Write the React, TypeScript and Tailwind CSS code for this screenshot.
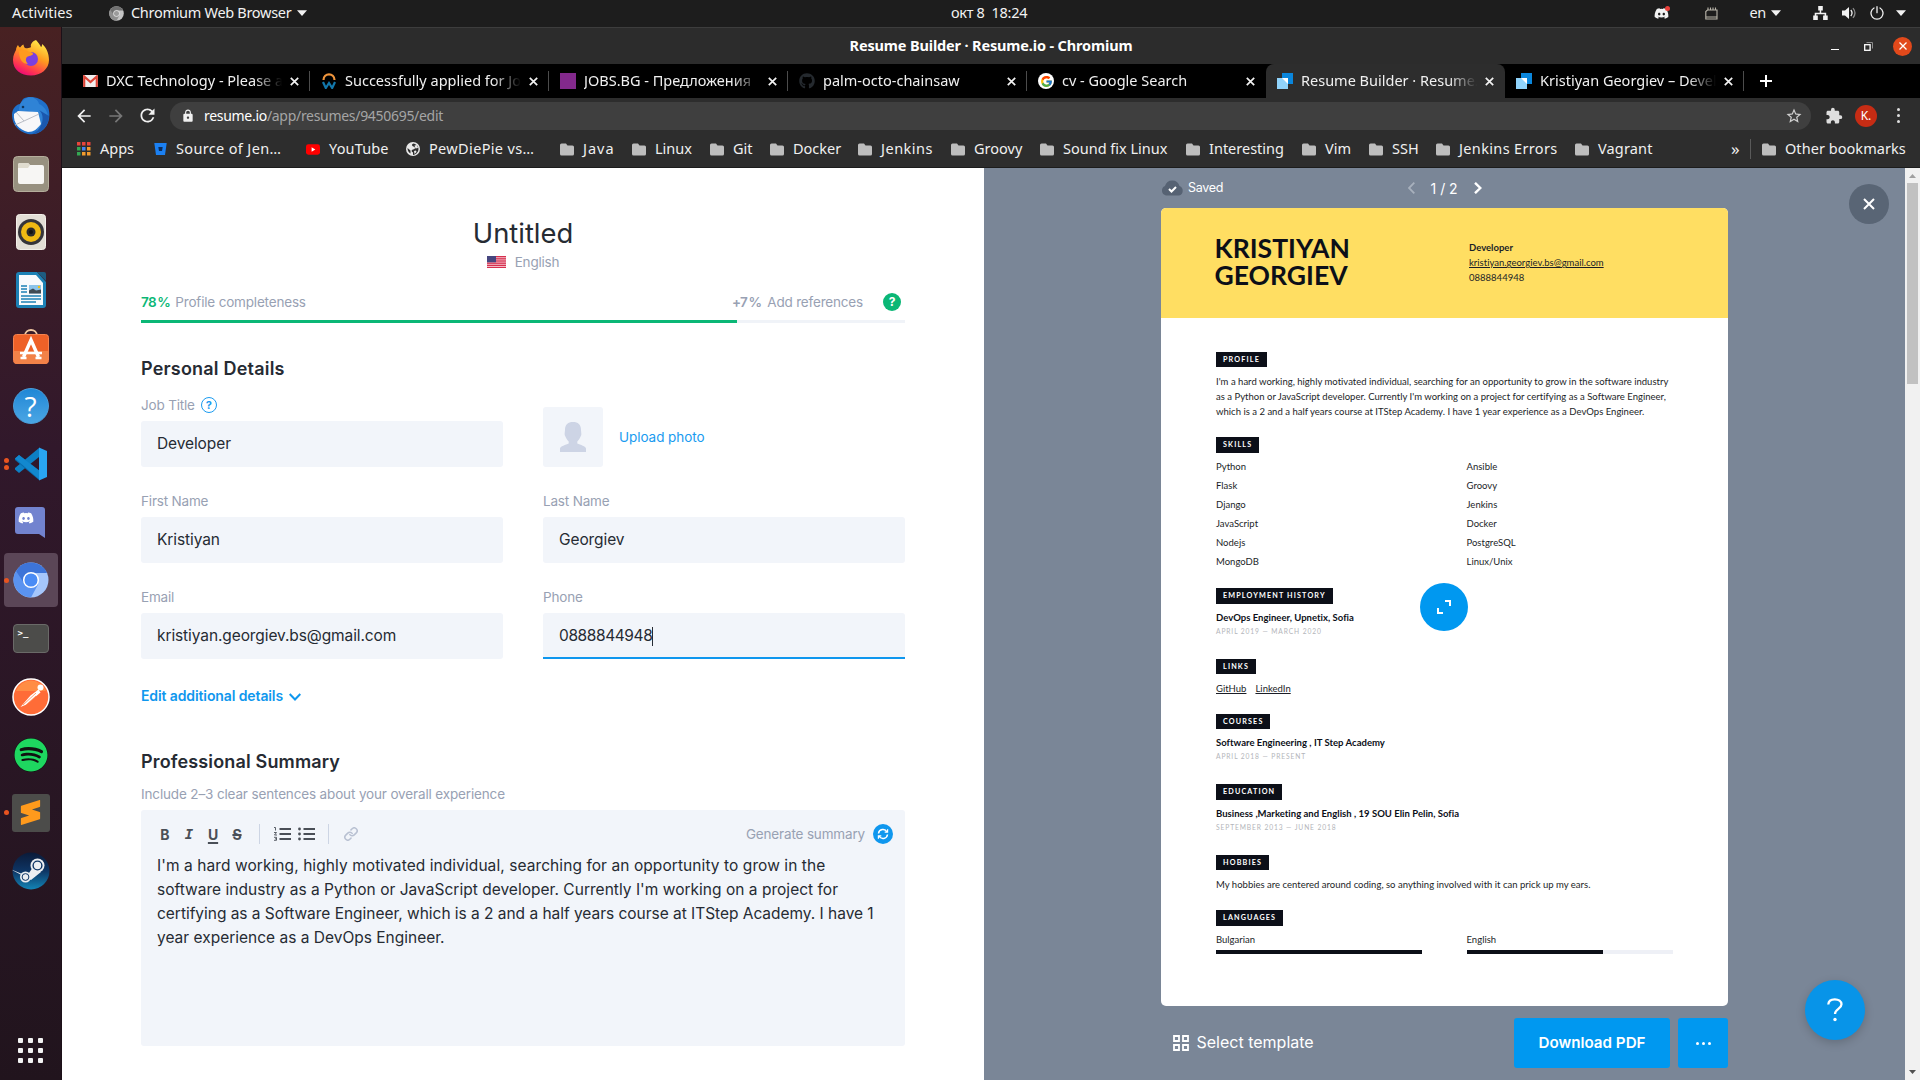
import React from 'react';
import type { ReactNode } from 'react';
import { FaDiscord, FaSpotify, FaGithub } from 'react-icons/fa6';
import { FcGoogle } from 'react-icons/fc';
import { SiSublimetext } from 'react-icons/si';
import { MdExtension, MdStarBorder, MdRefresh, MdArrowBack, MdArrowForward, MdLock } from 'react-icons/md';

/* ---------- Dock ---------- */

const FirefoxIcon = () => (
  <svg width="38" height="38" viewBox="0 0 38 38">
    <defs>
      <linearGradient id="ff" x1="0.8" y1="0" x2="0.3" y2="1">
        <stop offset="0" stopColor="#fff44f" />
        <stop offset="0.45" stopColor="#ff9a1f" />
        <stop offset="0.8" stopColor="#ff3750" />
        <stop offset="1" stopColor="#eb0878" />
      </linearGradient>
    </defs>
    <path d="M24 1c2 2 4 5 5 7 1-.5 1-2 1-3 4 3 7 9 7 16 0 9-8 15.500-18 15.500S1 31 1 21c0-5 2-8 3-10 0-2 1-4 2-5 .5 1 1 2 2 2.500 1-1 2-2.500 3.500-3 0 1 .5 2.500 1.500 3.500 3 .5 5 0 6-1C18 5 21 2 24 1z" fill="url(#ff)" />
    <circle cx="19" cy="20" r="7" fill="#7a3fe0" />
    <path d="M7 12c4-2 8-1 10 1 2 0 4 .5 4 2-1 2-4 1.500-6 3-2 2-1 5 1 7-5 0-9-4-9-13z" fill="#ff9a1f" />
  </svg>
);

const ThunderbirdIcon = () => (
  <svg width="40" height="40" viewBox="0 0 40 40">
    <path d="M12 3C18-1 30 1 36 9c4 7 3 18-3 24-5 5-12 6-16 5C8 36 1 29 1 19 1 12 6 8 9 8z" fill="#1f6fc9" />
    <path d="M14 3c6-4 13 0 14 5 5 2 10 8 9 16-3 8-7 11-13 14 5-8 4-18-3-22-6-3-10 0-13 0 0-6 1-10 6-13z" fill="#2f83d6" />
    <path d="M3 18l4-3 20 1 3 12c-4 5-7 8-13 8C8 34 2 27 3 18z" fill="#f7f7f9" />
    <path d="M5 16l8 9 15-7M13 25l-9 4" fill="none" stroke="#b9bdc6" strokeWidth="1" />
    <path d="M28 14c5 4 5 13-1 20-2 2-4 3-6 4 9 0 17-8 17-18z" fill="#1b58ae" />
    <circle cx="12" cy="11" r="1.300" fill="#10365f" />
  </svg>
);

const FilesIcon = () => (
  <svg width="36" height="36" viewBox="0 0 36 36">
    <rect x="0.500" y="0.500" width="35" height="35" rx="4" fill="#989180" stroke="#b5ae9c" />
    <path d="M5 9a2 2 0 0 1 2-2h8l2 2h12a2 2 0 0 1 2 2v15a2 2 0 0 1-2 2H7a2 2 0 0 1-2-2z" fill="#f7f6f4" />
    <path d="M5 9a2 2 0 0 1 2-2h8l2 2-2 3H5z" fill="#e0dccf" />
  </svg>
);

const RhythmboxIcon = () => (
  <svg width="30" height="36" viewBox="0 0 30 36">
    <rect x="0.500" y="0.500" width="29" height="35" rx="3" fill="#e2ded5" stroke="#f2efe9" />
    <circle cx="15" cy="18" r="13" fill="#35353a" />
    <circle cx="15" cy="18" r="10" fill="#efb913" />
    <circle cx="15" cy="18" r="4.500" fill="#2a2a2c" />
    <circle cx="15" cy="18" r="2" fill="#111" />
  </svg>
);

const WriterIcon = () => (
  <svg width="30" height="36" viewBox="0 0 30 36">
    <path d="M3 0h18l9 10v23a3 3 0 0 1-3 3H3a3 3 0 0 1-3-3V3a3 3 0 0 1 3-3z" fill="#1c81b5" />
    <path d="M3 3h17l7 8v22H3z" fill="#f8fafc" />
    <path d="M21 0h7a2 2 0 0 1 2 2v7z" fill="#1d5c80" />
    <path d="M5 14h6M5 17h6M5 20h6M5 24h20M5 27h20M5 30h15" stroke="#1c81b5" strokeWidth="1.400" />
    <rect x="13" y="13" width="12" height="8.500" fill="#8cc4ea" />
    <path d="M13 21.500v-3l4-2 3 2 5-1v4z" fill="#3f4b54" />
    <circle cx="23" cy="15" r="1.200" fill="#f5c211" />
  </svg>
);

const SoftwareIcon = () => (
  <svg className="-mt-[3px]" width="36" height="36" viewBox="0 0 36 36">
    <path d="M12 7c0-8 12-8 12 0" fill="none" stroke="#f2c9a2" strokeWidth="1.800" />
    <rect x="0.500" y="5.500" width="35" height="29" rx="3" fill="#ee6128" stroke="#f6834f" />
    <path d="M1 22h34v10a3 3 0 0 1-3 3H4a3 3 0 0 1-3-3z" fill="#f28248" />
    <path d="M10.500 28L18 11l7.500 17" fill="none" stroke="#fff" strokeWidth="3.400" />
    <path d="M7 24h22M7.500 29h6M22.500 29h6" fill="none" stroke="#fff" strokeWidth="2.600" />
  </svg>
);

const HelpDockIcon = () => (
  <div className="flex size-9 items-center justify-center rounded-full border border-[#4a9fdc] bg-linear-to-b from-[#1e87d6] to-[#4aa6e4] font-[Open_Sans] text-[28px] leading-none text-white">
    ?
  </div>
);

const VsCodeIcon = () => (
  <svg width="34" height="34" viewBox="0 0 34 34">
    <path d="M25 1v9L5 26 1 22.500v-1.500z" fill="#0d7fc4" />
    <path d="M5 8L1 11.500V13l24 20v-9z" fill="#0a6cae" />
    <path d="M1 11.500L5 8l21 16v9z" fill="#1288cf" />
    <path d="M25 0.500l8 3.500v26l-8 3.500z" fill="#29a5f2" />
  </svg>
);

const DiscordDockIcon = () => (
  <svg width="31" height="33" viewBox="0 0 31 33">
    <path d="M3 1h24a3 3 0 0 1 3 3v28l-6-4H3a3 3 0 0 1-3-3V4a3 3 0 0 1 3-3z" fill="#7283cf" />
    <FaDiscord x="3" y="4" width="24" height="22" color="#fff" />
  </svg>
);

const ChromiumIcon = ({ size, gray }: { size: number; gray?: boolean }) => (
  <svg width={size} height={size} viewBox="0 0 36 36">
    <circle cx="18" cy="18" r="17.500" fill={gray ? '#c4c4c4' : '#a5c6fb'} />
    <path d="M18 18L3 9A17.500 17.500 0 0 0 18 35.500l7-13z" fill={gray ? '#8f8f8f' : '#5a93f0'} />
    <path d="M3 9a17.500 17.500 0 0 1 31 2H18a8 8 0 0 0-7 10z" fill={gray ? '#707070' : '#3d74d8'} />
    <circle cx="18" cy="18" r="7.300" fill={gray ? '#9b9b9b' : '#4a8cf5'} stroke="#fff" strokeWidth="1.500" />
  </svg>
);

const TerminalIcon = () => (
  <div className="h-[29px] w-[36px] rounded-[4px] border border-[#6a6a68] bg-[#4c4c4a] pt-[3px] pl-[4px] font-[DejaVu_Sans_Mono] text-[9px] leading-[10px] font-bold text-white">
    &gt;_
  </div>
);

const PostmanIcon = () => (
  <svg width="38" height="38" viewBox="0 0 38 38">
    <circle cx="19" cy="19" r="18" fill="#ff6c37" stroke="#fff" strokeWidth="1.500" />
    <path d="M4 13a16 16 0 0 1 30 0z" fill="#ff8d45" />
    <circle cx="28.500" cy="9.500" r="3" fill="#fff" />
    <path d="M26.500 11.500l-8 6-10 11.500 6-2.500 8-7 6-5z" fill="#fff" />
    <path d="M11 27l13-12M14 27l10-9" stroke="#ff7a3c" strokeWidth="0.700" />
  </svg>
);

const SpotifyIcon = () => (
  <div className="size-[34px] rounded-full bg-[#111]">
    <FaSpotify className="size-[34px] text-[#1ed760]" />
  </div>
);

const SublimeIcon = () => (
  <div className="flex size-[38px] items-center justify-center rounded-[3px] bg-[#4c4c4a]">
    <SiSublimetext className="size-[25px] text-[#ff9a1c]" />
  </div>
);

const SteamIcon = () => (
  <svg width="38" height="38" viewBox="0 0 38 38">
    <defs>
      <linearGradient id="steam" x1="0" y1="0" x2="0" y2="1">
        <stop offset="0" stopColor="#0b1a38" />
        <stop offset="0.500" stopColor="#0e3564" />
        <stop offset="1" stopColor="#1387b8" />
      </linearGradient>
      <clipPath id="steamClip">
        <circle cx="19" cy="19" r="18.500" />
      </clipPath>
    </defs>
    <g clipPath="url(#steamClip)">
      <rect width="38" height="38" fill="url(#steam)" />
      <path d="M-2 17l17 7 6-9 8 5-10 8z" fill="#eceef1" />
      <circle cx="13.500" cy="25" r="5.500" fill="#eceef1" />
      <circle cx="13.500" cy="25" r="3.400" fill="none" stroke="#0e3564" strokeWidth="1" />
      <circle cx="25.500" cy="13.500" r="7" fill="#eceef1" />
      <circle cx="25.500" cy="13.500" r="4.400" fill="none" stroke="#0e3564" strokeWidth="1.400" />
    </g>
  </svg>
);

type DockItem = { icon: ReactNode; dots?: number; active?: boolean };

const dockItems: DockItem[] = [
  { icon: <FirefoxIcon /> },
  { icon: <ThunderbirdIcon /> },
  { icon: <FilesIcon /> },
  { icon: <RhythmboxIcon /> },
  { icon: <WriterIcon /> },
  { icon: <SoftwareIcon /> },
  { icon: <HelpDockIcon /> },
  { icon: <VsCodeIcon />, dots: 2 },
  { icon: <DiscordDockIcon /> },
  { icon: <ChromiumIcon size={36} />, dots: 1, active: true },
  { icon: <TerminalIcon /> },
  { icon: <PostmanIcon /> },
  { icon: <SpotifyIcon /> },
  { icon: <SublimeIcon />, dots: 1 },
  { icon: <SteamIcon /> },
];

const Dock = () => (
  <nav className="flex w-[62px] shrink-0 flex-col items-center border-r border-[#1c1018] bg-linear-to-b from-[#482122] via-[#31182b] via-40% to-[#21141d] pt-[1.500px]">
    {dockItems.map((item, i) => (
      <div key={i} className="flex h-[58.100px] w-full items-center justify-center">
        <div
          className={
            item.active
              ? 'relative flex h-[54px] w-[54px] items-center justify-center rounded-[4px] bg-[#5b4657]'
              : 'relative flex h-[54px] w-[54px] items-center justify-center'
          }
        >
          {item.icon}
          {item.dots && (
            <div className="absolute top-0 left-0 flex h-full w-[5px] flex-col items-center justify-center gap-[2px]">
              {Array.from({ length: item.dots }, (_, d) => (
                <span key={d} className="size-[5px] rounded-full bg-[#e95420]" />
              ))}
            </div>
          )}
        </div>
      </div>
    ))}
    <div className="mt-auto mb-[17px] grid grid-cols-3 gap-[5px]">
      {Array.from({ length: 9 }, (_, i) => (
        <span key={i} className="size-[5px] rounded-[1px] bg-[#f2f2f2]" />
      ))}
    </div>
  </nav>
);

/* ---------- System bar ---------- */

const Caret = ({ className = '' }: { className?: string }) => (
  <svg className={className} width="10" height="6" viewBox="0 0 10 6" fill="#f2f2f2">
    <path d="M0 0.300h10L5 6z" />
  </svg>
);

const SystemBar = () => (
  <header className="grid h-[27px] shrink-0 grid-cols-[1fr_auto_1fr] items-center bg-[#1d1d1d] pb-px text-[14.500px] tracking-[-0.300px] text-[#f2f2f2]">
    <div className="flex items-center">
      <span className="ml-3 w-[97px] tracking-normal">Activities</span>
      <ChromiumIcon size={15} gray />
      <span className="ml-[7px]">Chromium Web Browser</span>
      <Caret className="ml-[6px]" />
    </div>
    <span className="mr-[-60px] w-[78px] text-[14.500px] whitespace-pre">окт 8  18:24</span>
    <div className="flex items-center justify-end pr-[14px]">
      <div className="relative mr-[36px]">
        <FaDiscord className="size-[15px]" />
        <span className="absolute top-0 right-[-1px] size-[5px] rounded-full bg-[#e8403a]" />
      </div>
      <svg className="mr-[31px]" width="13" height="13" viewBox="0 0 13 13" fill="none" stroke="#b9b5aa" strokeWidth="1.100">
        <path d="M2.500 3h9.500v9H0.800V4.500zM3 0.500v2M5.500 0.500v2M8 0.500v2M10.500 0.500v2M0.800 10h11" />
      </svg>
      <span>en</span>
      <Caret className="ml-[5px]" />
      <svg className="ml-[32px]" width="15" height="14" viewBox="0 0 15 14" fill="#f2f2f2">
        <path d="M5.200 0h4.600v4.500H8.200v2.200h5v2.800h1.500V14h-4.600V9.500h1.500V8.200H3.300v1.300h1.500V14H.2V9.500h1.500V6.700h5V4.500H5.200z" />
      </svg>
      <svg className="ml-[14px]" width="15" height="14" viewBox="0 0 15 14" fill="#f2f2f2">
        <path d="M0 4.500h3L7 1v12L3 9.500H0z" />
        <path d="M8.800 4q2.500 3 0 6" fill="none" stroke="#f2f2f2" strokeWidth="1.300" />
        <path d="M11 2.200q4 4.800 0 9.600" fill="none" stroke="#8a8a8a" strokeWidth="1.300" />
      </svg>
      <svg className="ml-[13px]" width="14" height="14" viewBox="0 0 14 14" fill="none" stroke="#f2f2f2" strokeWidth="1.300" strokeLinecap="round">
        <path d="M7 0.700v6M4 2a6 6 0 1 0 6 0" />
      </svg>
      <Caret className="ml-[12px]" />
    </div>
  </header>
);

/* ---------- Browser chrome ---------- */

const TitleBar = () => (
  <div className="grid h-[37px] shrink-0 grid-cols-[1fr_auto_1fr] items-center border-t border-[#3d3d3d] bg-[#2c2c2c] text-white">
    <span />
    <h1 className="text-[14.500px] font-bold tracking-[-0.150px]">Resume Builder · Resume.io - Chromium</h1>
    <div className="flex items-center justify-end pr-[8px]">
      <span className="mt-[7px] h-[1.500px] w-[8px] bg-white" />
      <svg className="ml-[25px]" width="9" height="9" viewBox="0 0 9 9" fill="none">
        <path d="M2.500 0.500h6v6" stroke="#8b8b8b" />
        <rect x="0.700" y="2.700" width="5.400" height="5.600" stroke="#fff" strokeWidth="1.300" />
      </svg>
      <span className="ml-[20px] flex size-[19px] items-center justify-center rounded-full bg-[#e2491b]">
        <svg width="8" height="8" viewBox="0 0 8 8" stroke="#fff" strokeWidth="1.300">
          <path d="M0.500 0.500l7 7M7.500 0.500l-7 7" />
        </svg>
      </span>
    </div>
  </div>
);

const ResumeIoIcon = () => (
  <svg width="16" height="16" viewBox="0 0 16 16">
    <path d="M5 0h11v11H5z" fill="#0a86dc" />
    <path d="M0 5h11v11H0z" fill="#90d3fb" />
    <path d="M5 5h6v6z" fill="#fff" />
  </svg>
);

const GmailIcon = () => (
  <svg width="15" height="12" viewBox="0 0 15 12">
    <rect width="15" height="12" rx="1" fill="#f0eeee" />
    <path d="M1.200 12V1.500L7.500 7l6.300-5.500V12" fill="none" stroke="#dc4437" strokeWidth="2.200" />
  </svg>
);

const ArcWIcon = () => (
  <svg width="14" height="16" viewBox="0 0 14 16" fill="none">
    <path d="M1.500 7C1.500-.5 12.500-.5 12.500 7" stroke="#f0953c" strokeWidth="2.200" />
    <path d="M1 9l2.800 6L7 10l3.200 5L13 9" stroke="#1277ab" strokeWidth="2.200" />
  </svg>
);

const GoogleTabIcon = () => (
  <span className="flex size-4 items-center justify-center rounded-full bg-white">
    <FcGoogle className="size-[13px]" />
  </span>
);

const tabs: { title: string; icon: ReactNode; active?: boolean; divider?: boolean }[] = [
  { title: 'DXC Technology - Please a', icon: <GmailIcon />, divider: true },
  { title: 'Successfully applied for Jo', icon: <ArcWIcon />, divider: true },
  { title: 'JOBS.BG - Предложения', icon: <span className="size-4 bg-[#83298c]" />, divider: true },
  { title: 'palm-octo-chainsaw', icon: <FaGithub className="size-4 text-[#24292e]" />, divider: true },
  { title: 'cv - Google Search', icon: <GoogleTabIcon /> },
  { title: 'Resume Builder · Resume.', icon: <ResumeIoIcon />, active: true },
  { title: 'Kristiyan Georgiev – Devel', icon: <ResumeIoIcon />, divider: true },
];

const TabStrip = () => (
  <div className="flex h-[34px] shrink-0 bg-black pl-[8.500px] text-[14.500px] text-[#f0f0f0]">
    {tabs.map((tab) => (
      <div
        key={tab.title}
        className={
          tab.active
            ? 'flex w-[239px] shrink-0 items-center rounded-t-[8px] bg-[#2d2d2d] pl-[11.500px]'
            : 'flex w-[239px] shrink-0 items-center pl-[11.500px]'
        }
      >
        <span className="flex w-4 shrink-0 items-center justify-center">{tab.icon}</span>
        <span className="ml-2 w-[176px] shrink-0 overflow-hidden mask-r-from-84% mask-r-to-100% whitespace-nowrap">{tab.title}</span>
        <svg className="ml-[8px] shrink-0" width="9" height="9" viewBox="0 0 9 9" stroke="#f2f2f2" strokeWidth="1.700">
          <path d="M0.800 0.800l7.400 7.400M8.200 0.800l-7.400 7.400" />
        </svg>
        {tab.divider && <span className="ml-[10px] h-5 w-px bg-[#4c4c4c]" />}
      </div>
    ))}
    <svg className="ml-[16px] self-center" width="12" height="12" viewBox="0 0 12 12" stroke="#fff" strokeWidth="2">
      <path d="M6 0v12M0 6h12" />
    </svg>
  </div>
);

const AddressBar = () => (
  <div className="flex h-9 shrink-0 items-center bg-[#2d2d2d] pb-px text-[#f0f0f0]">
    <MdArrowBack className="ml-[12px] size-[20px]" />
    <MdArrowForward className="ml-[12px] size-[20px] text-[#777]" />
    <MdRefresh className="ml-[11px] size-[21px]" />
    <div className="ml-[12px] flex h-7 w-[1641px] items-center rounded-full bg-[#3f3f3f] pr-[8px] pl-[11px]">
      <MdLock className="size-[14px]" />
      <span className="ml-[9px] flex-1 text-[14px] tracking-[-0.300px] text-[#a5a5a5]">
        <span className="text-white">resume.io</span>/app/resumes/9450695/edit
      </span>
      <MdStarBorder className="size-[18px] text-[#d0d0d0]" />
    </div>
    <MdExtension className="ml-[14px] size-[18px] text-[#dedede]" />
    <span className="ml-[12px] flex size-[22px] items-center justify-center rounded-full bg-[#c62c14] text-[12px] text-white">K.</span>
    <span className="ml-[20px] flex flex-col gap-[3px]">
      <span className="size-[3px] rounded-full bg-[#dedede]" />
      <span className="size-[3px] rounded-full bg-[#dedede]" />
      <span className="size-[3px] rounded-full bg-[#dedede]" />
    </span>
  </div>
);

const FolderIcon = () => (
  <svg width="14" height="13" viewBox="0 0 14 13" fill="#bdbdbd">
    <path d="M1.500 0.500h4.500l1.500 2h5a1.500 1.500 0 0 1 1.500 1.500v7a1.500 1.500 0 0 1-1.500 1.500h-11A1.500 1.500 0 0 1 0 11V2A1.500 1.500 0 0 1 1.500 0.500z" />
  </svg>
);

const appDots = ['#e8453c', '#e8453c', '#e8453c', '#34a853', '#4285f4', '#f29b2e', '#34a853', '#f29b2e', '#f29b2e'];

const AppsIcon = () => (
  <svg width="14" height="14" viewBox="0 0 14 14">
    {appDots.map((c, i) => (
      <rect key={i} x={(i % 3) * 5} y={Math.floor(i / 3) * 5} width="3.500" height="3.500" fill={c} />
    ))}
  </svg>
);

const BitbucketIcon = () => (
  <svg width="13" height="12" viewBox="0 0 13 12">
    <path d="M0.300 0h12.400l-1.700 12H2z" fill="#1b80f2" />
    <path d="M4.300 4h4.400L8 8H5z" fill="#0b2c5c" />
  </svg>
);

const YouTubeIcon = () => (
  <svg width="15" height="11" viewBox="0 0 15 11">
    <rect width="15" height="11" rx="2.500" fill="#f00" />
    <path d="M6 3.200v4.600l4-2.300z" fill="#fff" />
  </svg>
);

const GlobeIcon = () => (
  <svg width="14" height="14" viewBox="0 0 14 14">
    <circle cx="7" cy="7" r="7" fill="#e8e8e8" />
    <path d="M7.500 1.500C6 2 5.500 3 6.500 4s2.500.5 2.500 2-2 1-3 2 0 2 1 2.500L7 13c3-.5 5.500-3 5.500-6S10 2 7.500 1.500zM1.500 6l3 2.500v3C2.500 10.500 1.500 8.500 1.500 6z" fill="#2d2d2d" />
    <path d="M8.500 3.500l2.500-.5 1 3-2.500.5zM8 9l2-.5.500 1.500L8.500 12z" fill="#e8e8e8" />
  </svg>
);

const bookmarks: { label: string; width: string; icon?: ReactNode }[] = [
  { label: 'Apps', width: 'w-[76px]', icon: <AppsIcon /> },
  { label: 'Source of Jen…', width: 'w-[153px] tracking-[0.350px]', icon: <BitbucketIcon /> },
  { label: 'YouTube', width: 'w-[100px] tracking-[0.150px]', icon: <YouTubeIcon /> },
  { label: 'PewDiePie vs…', width: 'w-[154px] tracking-[0.350px]', icon: <GlobeIcon /> },
  { label: 'Java', width: 'w-[72px] tracking-[1px]' },
  { label: 'Linux', width: 'w-[78px]' },
  { label: 'Git', width: 'w-[60px]' },
  { label: 'Docker', width: 'w-[88px]' },
  { label: 'Jenkins', width: 'w-[93px] tracking-[0.500px]' },
  { label: 'Groovy', width: 'w-[89px]' },
  { label: 'Sound fix Linux', width: 'w-[146px]' },
  { label: 'Interesting', width: 'w-[116px]' },
  { label: 'Vim', width: 'w-[67px]' },
  { label: 'SSH', width: 'w-[67px]' },
  { label: 'Jenkins Errors', width: 'w-[139px] tracking-[0.350px]' },
  { label: 'Vagrant', width: 'w-[156px] tracking-[0.150px]' },
];

const BookmarksBar = () => (
  <div className="flex h-[34px] shrink-0 items-center border-b border-[#1c1c1c] bg-[#2d2d2d] pb-[3px] pl-[15px] text-[14.500px] text-[#f0f0f0]">
    {bookmarks.map((b) => (
      <div key={b.label} className={`flex shrink-0 items-center gap-[9px] whitespace-nowrap ${b.width}`}>
        <span className="flex w-[14px] shrink-0 justify-center">{b.icon ?? <FolderIcon />}</span>
        {b.label}
      </div>
    ))}
    <span className="mb-[2px] w-[19px] text-[17px] leading-none">»</span>
    <span className="h-5 w-px bg-[#5a5a5a]" />
    <span className="mr-[9px] ml-[11px]">
      <FolderIcon />
    </span>
    <span className="whitespace-nowrap tracking-[0.050px]">Other bookmarks</span>
  </div>
);

/* ---------- Editor form ---------- */

const Label = ({ children }: { children: ReactNode }) => (
  <div className="mb-[6px] flex h-5 items-center gap-[6px] text-[13.500px] tracking-[-0.180px] text-[#98a1b3]">{children}</div>
);

const Field = ({ label, value, hint, focused }: { label: string; value: string; hint?: boolean; focused?: boolean }) => (
  <div>
    <Label>
      {label}
      {hint && (
        <span className="flex size-4 items-center justify-center rounded-full border-[1.500px] border-[#1a9bf0] text-[11px] font-bold text-[#1a9bf0]">
          ?
        </span>
      )}
    </Label>
    <div
      className={
        focused
          ? 'flex h-[46px] items-center rounded-t-[3px] border-b-2 border-[#0f97ee] bg-[#f2f5fa] pt-[2px] pl-4 text-[15.500px] tracking-[-0.400px] text-[#262b33]'
          : 'flex h-[46px] items-center rounded-[3px] bg-[#f2f5fa] pl-4 text-[15.500px] tracking-[-0.100px] text-[#262b33]'
      }
    >
      {value}
      {focused && <span className="h-[19px] w-px bg-[#262b33]" />}
    </div>
  </div>
);

const UsFlag = () => (
  <svg width="19" height="12" viewBox="0 0 19 12">
    <rect width="19" height="12" fill="#f3b9c4" />
    <path d="M0 0.500h19M0 2.300h19M0 4.100h19M0 5.900h19M0 7.700h19M0 9.500h19M0 11.500h19" stroke="#d6304f" strokeWidth="1" />
    <rect width="9" height="6.300" fill="#46467f" />
  </svg>
);

const EditorToolbar = () => (
  <div className="flex h-[30px] items-center font-[Inter] text-[14px] font-bold text-[#4a4f57]">
    <span className="w-6 text-center">B</span>
    <span className="w-6 text-center font-[DejaVu_Sans_Mono] italic">I</span>
    <span className="w-6 text-center underline decoration-[1.500px] underline-offset-2">U</span>
    <span className="w-6 text-center line-through decoration-[1.500px]">S</span>
    <span className="ml-[10px] h-5 w-px bg-[#cdd5e4]" />
    <svg className="ml-[14px]" width="17" height="14" viewBox="0 0 17 14" stroke="#4a4f57" fill="none">
      <path d="M5.500 2H17M5.500 7H17M5.500 12H17" strokeWidth="2" />
      <path d="M0 .5h1.500v3M0 5.500h2.500L.5 8h2.500M0 10.300h2.500v3H0M1 11.800h1.500" strokeWidth="0.900" />
    </svg>
    <svg className="ml-[7px]" width="17" height="14" viewBox="0 0 17 14" stroke="#4a4f57" fill="#4a4f57">
      <path d="M5.500 2H17M5.500 7H17M5.500 12H17" strokeWidth="2" />
      <path d="M1.500 2h.01M1.500 7h.01M1.500 12h.01" strokeWidth="2.800" strokeLinecap="round" />
    </svg>
    <span className="ml-[13px] h-5 w-px bg-[#cdd5e4]" />
    <svg className="ml-[15px]" width="14" height="14" viewBox="0 0 24 24" fill="none" stroke="#b9c1d2" strokeWidth="2.600" strokeLinecap="round">
      <path d="M10 13a5 5 0 0 0 7.540.54l3.500-3.500a5 5 0 0 0-7.070-7.070l-2 2" />
      <path d="M14 11a5 5 0 0 0-7.540-.54l-3.500 3.500a5 5 0 0 0 7.070 7.070l2-2" />
    </svg>
    <span className="ml-auto text-[13.500px] font-normal tracking-[-0.160px] text-[#98a1b3]">Generate summary</span>
    <span className="mr-[12px] ml-[8px] flex size-5 items-center justify-center rounded-full bg-[#0f97ee]">
      <svg width="12" height="12" viewBox="0 0 12 12" fill="none" stroke="#fff" strokeWidth="1.500">
        <path d="M1.500 5.500a4.500 4.500 0 0 1 8.500-1.500M10.500 6.500A4.500 4.500 0 0 1 2 8" />
        <path d="M10.600 1.300V4.200H7.700M1.400 10.700V7.800H4.300" strokeWidth="1.200" />
      </svg>
    </span>
  </div>
);

const FormPanel = () => (
  <main className="flex w-[922px] shrink-0 flex-col bg-white px-[79px] pt-[47px] font-[Inter] text-[#262b33]">
    <h2 className="h-9 text-center text-[27.400px] leading-9">Untitled</h2>
    <div className="mt-px flex h-5 items-center justify-center gap-[9px] text-[13.500px] tracking-[-0.200px] text-[#98a1b3]">
      <UsFlag />
      English
    </div>
    <div className="mt-5 flex h-5 items-center text-[13.500px] tracking-[-0.180px] text-[#98a1b3]">
      <span className="mr-[5px] font-semibold tracking-[-0.600px] [word-spacing:-1.500px] text-[#0bb776]">78 %</span>
      Profile completeness
      <span className="mr-[6px] ml-auto font-semibold tracking-[-0.700px] [word-spacing:-1.500px]">+7 %</span>
      Add references
      <span className="mr-1 ml-5 flex size-[18px] items-center justify-center rounded-full bg-[#0bb776] text-[12px] font-bold text-white">?</span>
    </div>
    <div className="mt-2 h-[3px] shrink-0 bg-[#f0f3f8]">
      <div className="h-full w-[78%] bg-[#0bb776]" />
    </div>

    <h3 className="mt-[32px] mb-[12px] h-7 text-[18px] leading-7 font-semibold tracking-[0.200px]">Personal Details</h3>
    <div className="grid grid-cols-2 gap-x-10 gap-y-6">
      <Field label="Job Title" value="Developer" hint />
      <div className="flex items-center self-end text-[13.500px] tracking-[-0.050px] text-[#1a9bf0]">
        <span className="mr-4 flex size-[60px] items-center justify-center rounded-[3px] bg-[#f2f5fa]">
          <svg width="26" height="30" viewBox="0 0 26 30" fill="#cdd4e5">
            <path d="M13 0c5 0 8 2.500 8 8 0 1 .5 3 .3 5-.8 2-2 4.500-4 6.500v2c3 1.500 8.700 2.500 8.700 5V30H0v-3.500c0-2.500 6-3.500 8.700-5v-2c-2-2-3.200-4.500-4-6.500C4.500 11 5 9 5 8c0-5.500 3-8 8-8z" />
          </svg>
        </span>
        Upload photo
      </div>
      <Field label="First Name" value="Kristiyan" />
      <Field label="Last Name" value="Georgiev" />
      <Field label="Email" value="kristiyan.georgiev.bs@gmail.com" />
      <Field label="Phone" value="0888844948" focused />
    </div>
    <div className="mt-[26px] flex h-5 items-center gap-[6px] text-[14px] font-semibold tracking-[-0.110px] text-[#0f97ee]">
      Edit additional details
      <svg className="mt-[3px]" width="12" height="8" viewBox="0 0 12 8" fill="none" stroke="#0f97ee" strokeWidth="2">
        <path d="M0.700 1L6 6.500 11.300 1" />
      </svg>
    </div>

    <h3 className="mt-[43px] h-7 text-[18px] leading-7 font-semibold tracking-[0.150px]">Professional Summary</h3>
    <p className="mt-2 mb-[6px] h-5 text-[13.500px] leading-5 tracking-[-0.145px] text-[#98a1b3]">
      Include 2–3 clear sentences about your overall experience
    </p>
    <section className="h-[236px] shrink-0 rounded-[3px] bg-[#f2f5fa] pt-[9px]">
      <div className="pl-3">
        <EditorToolbar />
      </div>
      <div className="mt-[5px] pl-4 text-[15.500px] leading-6 whitespace-nowrap">
        <div className="tracking-[0.075px]">I'm a hard working, highly motivated individual, searching for an opportunity to grow in the</div>
        <div className="tracking-[0.022px]">software industry as a Python or JavaScript developer. Currently I'm working on a project for</div>
        <div className="tracking-[-0.030px]">certifying as a Software Engineer, which is a 2 and a half years course at ITStep Academy. I have 1</div>
        <div>year experience as a DevOps Engineer.</div>
      </div>
    </section>
  </main>
);

/* ---------- Resume preview ---------- */

const Section = ({ title, className, children }: { title: string; className: string; children: ReactNode }) => (
  <section className={className}>
    <h4 className="mb-[6.500px] inline-block h-[15.500px] bg-[#0c0f18] px-[7px] align-top text-[7.200px] leading-[15.500px] font-bold tracking-[1.150px] text-white">
      {title}
    </h4>
    {children}
  </section>
);

const Entry = ({ title, dates }: { title: string; dates: string }) => (
  <>
    <div className="-mt-[0.500px] text-[9.520px] leading-[15px] font-bold text-[#0c0f18]">{title}</div>
    <div className="text-[6.700px] leading-[12px] tracking-[0.880px] text-[#b3b5ba]">{dates}</div>
  </>
);

const skills = ['Python', 'Ansible', 'Flask', 'Groovy', 'Django', 'Jenkins', 'JavaScript', 'Docker', 'Nodejs', 'PostgreSQL', 'MongoDB', 'Linux/Unix'];

const languages = [
  { name: 'Bulgarian', level: 100 },
  { name: 'English', level: 66.3 },
];

const ResumePage = () => (
  <article className="relative flex h-[798px] w-[567px] flex-col overflow-hidden rounded-[5px] bg-white font-[Lato] text-[9.500px] leading-[15px] tracking-[0.012px] text-[#1b1e27]">
    <header className="flex h-[110px] shrink-0 items-start bg-[#ffde62] pl-[53.500px]">
      <div className="mt-[27px] w-[254.500px] text-[26.500px] leading-[27.400px] font-bold text-[#0c0f18]">
        <div>KRISTIYAN</div>
        <div>GEORGIEV</div>
      </div>
      <div className="mt-[32px]">
        <div className="font-bold">Developer</div>
        <div className="underline">kristiyan.georgiev.bs@gmail.com</div>
        <div>0888844948</div>
      </div>
    </header>
    <div className="pt-[33.500px] pl-[55px]">
      <Section title="PROFILE" className="h-[85.500px]">
        <div className="whitespace-nowrap">
          <div>I'm a hard working, highly motivated individual, searching for an opportunity to grow in the software industry</div>
          <div>as a Python or JavaScript developer. Currently I'm working on a project for certifying as a Software Engineer,</div>
          <div>which is a 2 and a half years course at ITStep Academy. I have 1 year experience as a DevOps Engineer.</div>
        </div>
      </Section>
      <Section title="SKILLS" className="h-[151px]">
        <div className="-mt-[2px] grid grid-cols-[250.500px_200px] leading-[19px]">
          {skills.map((s) => (
            <span key={s}>{s}</span>
          ))}
        </div>
      </Section>
      <Section title="EMPLOYMENT HISTORY" className="h-[70.500px]">
        <Entry title="DevOps Engineer, Upnetix, Sofia" dates="APRIL 2019 — MARCH 2020" />
      </Section>
      <Section title="LINKS" className="h-[55px]">
        <div className="flex gap-[9px] underline">
          <span>GitHub</span>
          <span>LinkedIn</span>
        </div>
      </Section>
      <Section title="COURSES" className="h-[70.500px]">
        <Entry title="Software Engineering , IT Step Academy" dates="APRIL 2018 — PRESENT" />
      </Section>
      <Section title="EDUCATION" className="h-[70.500px]">
        <Entry title="Business ,Marketing and English , 19 SOU Elin Pelin, Sofia" dates="SEPTEMBER 2013 — JUNE 2018" />
      </Section>
      <Section title="HOBBIES" className="h-[55.500px]">
        <div>My hobbies are centered around coding, so anything involved with it can prick up my ears.</div>
      </Section>
      <Section title="LANGUAGES" className="">
        <div className="-mt-[0.500px] grid grid-cols-[206px_206px] gap-x-[44.500px]">
          {languages.map((l) => (
            <div key={l.name}>
              {l.name}
              <div className="mt-[3px] h-1 bg-[#eef0f6]">
                <div className="h-full bg-[#0c0f18]" style={{ width: `${l.level}%` }} />
              </div>
            </div>
          ))}
        </div>
      </Section>
    </div>
    <button className="absolute top-[375px] left-[259px] flex size-12 items-center justify-center rounded-full bg-[#0098f0]">
      <svg width="14" height="14" viewBox="0 0 14 14" fill="none" stroke="#fff" strokeWidth="2">
        <path d="M8 1h5v5M1 8v5h5" />
      </svg>
    </button>
  </article>
);

const PreviewPanel = () => (
  <aside className="relative flex flex-1 flex-col items-center bg-[#7a8697] font-[Inter] text-white">
    <div className="grid h-10 w-[567px] grid-cols-[1fr_auto_1fr] items-center">
      <div className="flex items-center text-[12.500px] tracking-[-0.300px]">
        <svg className="mr-[4px]" width="23" height="16" viewBox="0 0 23 16">
          <path d="M5 15.500a5 5 0 0 1-1-9.500 7.500 7.500 0 0 1 14.500 0A5 5 0 0 1 18 15.500z" fill="#566273" />
          <path d="M8 9l2.500 2.500 4.500-4.500" fill="none" stroke="#fff" strokeWidth="2" />
        </svg>
        Saved
      </div>
      <div className="flex items-center text-[14px]">
        <svg width="7" height="12" viewBox="0 0 7 12" fill="none" stroke="#a8b1bd" strokeWidth="1.800">
          <path d="M6.300 0.700L1 6l5.300 5.300" />
        </svg>
        <span className="mx-[16px] w-[27px] text-center whitespace-nowrap">1 / 2</span>
        <svg width="8" height="12" viewBox="0 0 8 12" fill="none" stroke="#fff" strokeWidth="2.400">
          <path d="M1 0.800L6.300 6 1 11.200" />
        </svg>
      </div>
      <span />
    </div>
    <ResumePage />
    <div className="mt-3 flex h-[50px] w-[567px] items-center">
      <svg className="ml-[12px]" width="16" height="16" viewBox="0 0 16 16" fill="none" stroke="#fff" strokeWidth="1.800">
        <path d="M1 1h5v5H1zM10 1h5v5h-5zM1 10h5v5H1zM10 10h5v5h-5z" />
      </svg>
      <span className="mb-[2px] ml-[7.500px] text-[16px]">Select template</span>
      <button className="ml-auto h-[50px] w-[156px] rounded-[3px] bg-[#0098f0] text-[15.200px] font-semibold">Download PDF</button>
      <button className="ml-2 flex h-[50px] w-[50px] items-center justify-center gap-[3px] rounded-[3px] bg-[#0098f0]">
        <span className="size-[3px] rounded-full bg-white" />
        <span className="size-[3px] rounded-full bg-white" />
        <span className="size-[3px] rounded-full bg-white" />
      </button>
    </div>
    <button className="absolute top-4 right-[16px] flex size-10 items-center justify-center rounded-full bg-[#596575]">
      <svg width="12" height="12" viewBox="0 0 12 12" stroke="#fff" strokeWidth="2">
        <path d="M1 1l10 10M11 1L1 11" />
      </svg>
    </button>
    <button className="absolute right-[40px] bottom-[40px] flex size-[60px] items-center justify-center rounded-full bg-[#0894e8] shadow-[0_3px_10px_rgba(0,0,0,0.18)]">
      <svg width="16" height="24" viewBox="0 0 16 24" fill="none" stroke="#fff" strokeWidth="2.300">
        <path d="M1.300 6.500C1.500 3 4 1.300 7.800 1.300S14.500 3.300 14.500 6.300c0 4.700-6.500 4.500-6.500 9.700" />
        <circle cx="8" cy="21.500" r="1.700" fill="#fff" stroke="none" />
      </svg>
    </button>
  </aside>
);

const Scrollbar = () => (
  <div className="flex w-[15px] shrink-0 flex-col items-center bg-[#f1f1f1]">
    <svg className="mt-[6px]" width="7" height="4" viewBox="0 0 7 4" fill="#a0a0a0">
      <path d="M0 4h7L3.500 0z" />
    </svg>
    <div className="mt-[5px] h-[201px] w-[11px] bg-[#c1c1c1]" />
    <svg className="mt-auto mb-[6px]" width="7" height="4" viewBox="0 0 7 4" fill="#505050">
      <path d="M0 0h7L3.500 4z" />
    </svg>
  </div>
);

export default function App() {
  return (
    <div className="flex h-[1080px] w-[1920px] flex-col overflow-hidden bg-[#1d1d1d] font-[Noto_Sans]">
      <SystemBar />
      <div className="flex min-h-0 flex-1">
        <Dock />
        <div className="flex min-w-0 flex-1 flex-col">
          <TitleBar />
          <TabStrip />
          <AddressBar />
          <BookmarksBar />
          <div className="flex min-h-0 flex-1 overflow-hidden">
            <FormPanel />
            <PreviewPanel />
            <Scrollbar />
          </div>
        </div>
      </div>
    </div>
  );
}
